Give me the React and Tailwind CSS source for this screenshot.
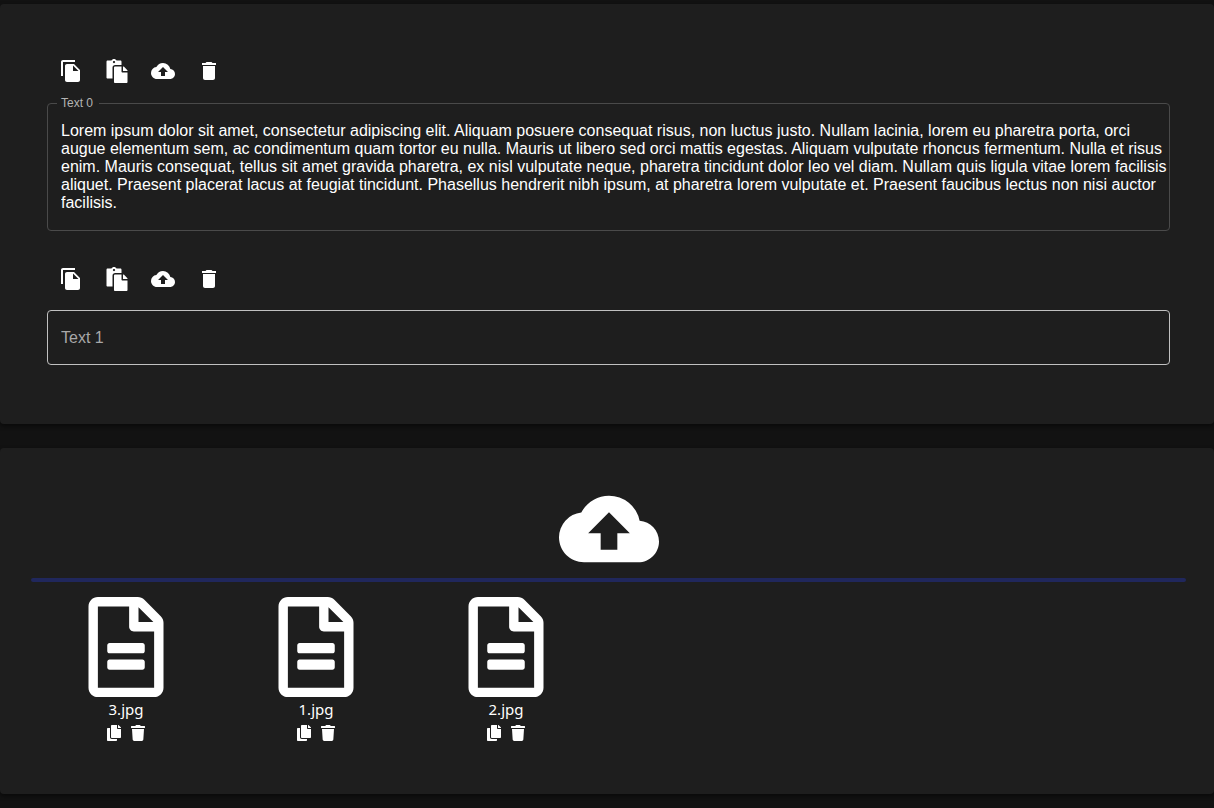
import { FaCopy, FaPaste, FaRegFileAlt, FaTrash } from "react-icons/fa";
import { MdCloudUpload, MdDelete, MdFileCopy } from "react-icons/md";

const LOREM =
  "Lorem ipsum dolor sit amet, consectetur adipiscing elit. Aliquam posuere consequat risus, non luctus justo. Nullam lacinia, lorem eu pharetra porta, orci augue elementum sem, ac condimentum quam tortor eu nulla. Mauris ut libero sed orci mattis egestas. Aliquam vulputate rhoncus fermentum. Nulla et risus enim. Mauris consequat, tellus sit amet gravida pharetra, ex nisl vulputate neque, pharetra tincidunt dolor leo vel diam. Nullam quis ligula vitae lorem facilisis aliquet. Praesent placerat lacus at feugiat tincidunt. Phasellus hendrerit nibh ipsum, at pharetra lorem vulputate et. Praesent faucibus lectus non nisi auctor facilisis.";

const ACTIONS = [
  { label: "Copy", Icon: MdFileCopy },
  { label: "Paste", Icon: FaPaste },
  { label: "Upload", Icon: MdCloudUpload },
  { label: "Delete", Icon: MdDelete },
];

const FILES = ["3.jpg", "1.jpg", "2.jpg"];

function Toolbar() {
  return (
    <div className="flex h-12 items-center pl-px">
      {ACTIONS.map(({ label, Icon }) => (
        <button
          key={label}
          type="button"
          aria-label={label}
          className="flex h-12 w-[46px] items-center justify-center"
        >
          <Icon className="size-6" />
        </button>
      ))}
    </div>
  );
}

function Panel({ children, className }) {
  return (
    <section
      className={`rounded bg-[#1e1e1e] shadow-[0_2px_4px_rgba(0,0,0,0.5)] ${className}`}
    >
      {children}
    </section>
  );
}

function FileCard({ name }) {
  return (
    <li className="flex w-[190px] flex-col items-center">
      <FaRegFileAlt className="size-[100px]" />
      <span className="text-[15px] leading-6">{name}</span>
      <div className="flex gap-2">
        <button type="button" aria-label={`Copy ${name}`} className="flex h-6 w-4 items-center justify-center">
          <FaCopy className="size-4" />
        </button>
        <button type="button" aria-label={`Delete ${name}`} className="flex h-6 w-4 items-center justify-center">
          <FaTrash className="size-4" />
        </button>
      </div>
    </li>
  );
}

export default function App() {
  return (
    <main className="flex min-h-screen flex-col gap-6 bg-[#121212] pt-1 pb-3.5 font-['Noto_Sans',sans-serif] text-white">
      <Panel className="pt-[43px] pr-11 pb-[59px] pl-[47px] font-['Liberation_Sans',sans-serif]">
        <Toolbar />
        <fieldset className="min-w-0 rounded border border-[#4a4a4a] pb-[18px] pl-[13px]">
          <legend className="-ml-1 pr-1.5 pl-1 text-xs leading-4 text-[#b4b4b4]">
            <label htmlFor="text-0">Text 0</label>
          </legend>
          <textarea
            id="text-0"
            rows={5}
            defaultValue={LOREM}
            className="mt-[11px] block w-full resize-none overflow-hidden bg-transparent text-base leading-[18px] outline-none"
          />
        </fieldset>
        <div className="pt-6">
          <Toolbar />
          <input
            aria-label="Text 1"
            placeholder="Text 1"
            className="mt-[7px] block h-[55px] w-full rounded border border-[#c0c0c0] bg-transparent px-[13px] text-base outline-none placeholder:text-[#a8a8a8]"
          />
        </div>
      </Panel>

      <Panel className="pt-[31px] pr-7 pb-[49px] pl-[31px]">
        <button
          type="button"
          aria-label="Upload files"
          className="mx-auto flex items-center justify-center"
        >
          <MdCloudUpload className="size-[100px]" />
        </button>
        <div className="-mt-px h-1 rounded-xs bg-[#20275c]" />
        <ul className="mt-[15px] flex flex-wrap">
          {FILES.map((name) => (
            <FileCard key={name} name={name} />
          ))}
        </ul>
      </Panel>
    </main>
  );
}
